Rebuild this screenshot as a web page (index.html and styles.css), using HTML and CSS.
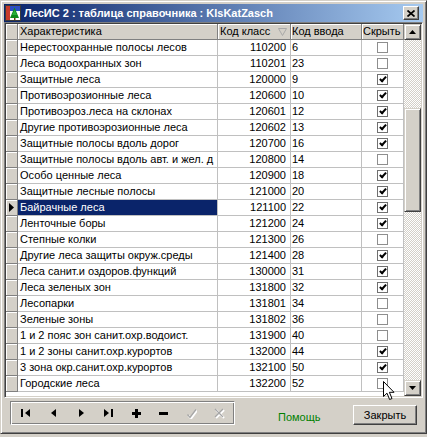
FILE: index.html
```html
<!DOCTYPE html>
<html>
<head>
<meta charset="utf-8">
<link rel="stylesheet" href="styles.css">
</head>
<body>
<div class="window">
  <div class="titlebar">
    <svg class="appicon" width="16" height="16" viewBox="0 0 16 16">
      <rect x="0.5" y="0.5" width="15" height="15" fill="#fff" stroke="#3a3a3a"/>
      <rect x="1" y="1" width="4" height="14" fill="#c83a2a"/>
      <rect x="5" y="1" width="10" height="5" fill="#2d4fc4"/>
      <polygon points="9.5,2.5 14,13 5,13" fill="#0f8a1c"/>
      <polygon points="9.5,5 12,10 7,10" fill="#2bb03a"/>
      <rect x="9" y="13" width="1.5" height="2" fill="#6b3a10"/>
    </svg>
    <span class="title">ЛесИС 2 : таблица справочника : KlsKatZasch</span>
    <div class="close">
      <svg width="8" height="7" viewBox="0 0 8 7"><path d="M0.5 0.5 L7.5 6.5 M7.5 0.5 L0.5 6.5" stroke="#000" stroke-width="1.7"/></svg>
    </div>
  </div>

  <div class="grid">
    <div class="table">
      <div class="row head">
        <div class="ind"></div>
        <div class="c1">Характеристика</div>
        <div class="c2 hc2">Код класс <svg class="sort" width="9" height="8" viewBox="0 0 9 8"><polygon points="0.5,0.5 8.5,0.5 4.5,7.5" fill="none" stroke="#a8a8a8"/></svg></div>
        <div class="c3">Код ввода</div>
        <div class="c4 hc4">Скрыть</div>
      </div>
      <div class="row"><div class="ind"></div><div class="c1">Нерестоохранные полосы лесов</div><div class="c2">110200</div><div class="c3">6</div><div class="c4"><div class="cb"></div></div></div>
      <div class="row"><div class="ind"></div><div class="c1">Леса водоохранных зон</div><div class="c2">110201</div><div class="c3">23</div><div class="c4"><div class="cb"></div></div></div>
      <div class="row"><div class="ind"></div><div class="c1">Защитные леса</div><div class="c2">120000</div><div class="c3">9</div><div class="c4"><div class="cb on"></div></div></div>
      <div class="row"><div class="ind"></div><div class="c1">Противоэрозионные леса</div><div class="c2">120600</div><div class="c3">10</div><div class="c4"><div class="cb on"></div></div></div>
      <div class="row"><div class="ind"></div><div class="c1">Противоэроз.леса на склонах</div><div class="c2">120601</div><div class="c3">12</div><div class="c4"><div class="cb on"></div></div></div>
      <div class="row"><div class="ind"></div><div class="c1">Другие противоэрозионные леса</div><div class="c2">120602</div><div class="c3">13</div><div class="c4"><div class="cb on"></div></div></div>
      <div class="row"><div class="ind"></div><div class="c1">Защитные полосы вдоль дорог</div><div class="c2">120700</div><div class="c3">16</div><div class="c4"><div class="cb on"></div></div></div>
      <div class="row"><div class="ind"></div><div class="c1">Защитные полосы вдоль авт. и жел. д</div><div class="c2">120800</div><div class="c3">14</div><div class="c4"><div class="cb"></div></div></div>
      <div class="row"><div class="ind"></div><div class="c1">Особо ценные леса</div><div class="c2">120900</div><div class="c3">18</div><div class="c4"><div class="cb on"></div></div></div>
      <div class="row"><div class="ind"></div><div class="c1">Защитные лесные полосы</div><div class="c2">121000</div><div class="c3">20</div><div class="c4"><div class="cb on"></div></div></div>
      <div class="row"><div class="ind cur"><svg width="5" height="9" viewBox="0 0 5 9"><polygon points="0,0 5,4.5 0,9" fill="#000"/></svg></div><div class="c1 sel">Байрачные леса</div><div class="c2">121100</div><div class="c3">22</div><div class="c4"><div class="cb on"></div></div></div>
      <div class="row"><div class="ind"></div><div class="c1">Ленточные боры</div><div class="c2">121200</div><div class="c3">24</div><div class="c4"><div class="cb on"></div></div></div>
      <div class="row"><div class="ind"></div><div class="c1">Степные колки</div><div class="c2">121300</div><div class="c3">26</div><div class="c4"><div class="cb"></div></div></div>
      <div class="row"><div class="ind"></div><div class="c1">Другие леса защиты окруж.среды</div><div class="c2">121400</div><div class="c3">28</div><div class="c4"><div class="cb on"></div></div></div>
      <div class="row"><div class="ind"></div><div class="c1">Леса санит.и оздоров.функций</div><div class="c2">130000</div><div class="c3">31</div><div class="c4"><div class="cb on"></div></div></div>
      <div class="row"><div class="ind"></div><div class="c1">Леса зеленых зон</div><div class="c2">131800</div><div class="c3">32</div><div class="c4"><div class="cb on"></div></div></div>
      <div class="row"><div class="ind"></div><div class="c1">Лесопарки</div><div class="c2">131801</div><div class="c3">34</div><div class="c4"><div class="cb"></div></div></div>
      <div class="row"><div class="ind"></div><div class="c1">Зеленые зоны</div><div class="c2">131802</div><div class="c3">36</div><div class="c4"><div class="cb"></div></div></div>
      <div class="row"><div class="ind"></div><div class="c1">1 и 2 пояс зон санит.охр.водоист.</div><div class="c2">131900</div><div class="c3">40</div><div class="c4"><div class="cb"></div></div></div>
      <div class="row"><div class="ind"></div><div class="c1">1 и 2 зоны санит.охр.курортов</div><div class="c2">132000</div><div class="c3">44</div><div class="c4"><div class="cb on"></div></div></div>
      <div class="row"><div class="ind"></div><div class="c1">3 зона окр.санит.охр.курортов</div><div class="c2">132100</div><div class="c3">50</div><div class="c4"><div class="cb on"></div></div></div>
      <div class="row"><div class="ind"></div><div class="c1">Городские леса</div><div class="c2">132200</div><div class="c3">52</div><div class="c4"><div class="cb"></div></div></div>
    </div>
    <div class="vscroll">
      <div class="sbtn"><svg width="7" height="4" viewBox="0 0 7 4"><polygon points="0,4 3.5,0 7,4" fill="#000"/></svg></div>
      <div class="track"><div class="thumb"></div></div>
      <div class="sbtn"><svg width="7" height="4" viewBox="0 0 7 4"><polygon points="0,0 7,0 3.5,4" fill="#000"/></svg></div>
    </div>
  </div>

  <div class="toolbar">
    <div class="nav">
      <div class="nb"><svg width="10" height="8" viewBox="0 0 10 8"><rect x="0" y="0" width="2" height="8" fill="#000"/><polygon points="4,4 9,0 9,8" fill="#000"/></svg></div>
      <div class="nb"><svg width="5" height="8" viewBox="0 0 5 8"><polygon points="0,4 5,0 5,8" fill="#000"/></svg></div>
      <div class="nb"><svg width="5" height="8" viewBox="0 0 5 8"><polygon points="0,0 5,4 0,8" fill="#000"/></svg></div>
      <div class="nb"><svg width="10" height="8" viewBox="0 0 10 8"><polygon points="0,0 5,4 0,8" fill="#000"/><rect x="7" y="0" width="2" height="8" fill="#000"/></svg></div>
      <div class="nb"><svg width="9" height="9" viewBox="0 0 9 9"><rect x="3" y="0" width="3" height="9" fill="#000"/><rect x="0" y="3" width="9" height="3" fill="#000"/></svg></div>
      <div class="nb"><svg width="9" height="3" viewBox="0 0 9 3"><rect x="0" y="0" width="9" height="3" fill="#000"/></svg></div>
      <div class="nb"><svg width="11" height="11" viewBox="0 0 11 11"><path d="M1.5 6.5 L4 9.5 L10 1.5" fill="none" stroke="#fff" stroke-width="2.2" transform="translate(1 1)"/><path d="M1.5 6.5 L4 9.5 L10 1.5" fill="none" stroke="#a6a6a6" stroke-width="1.3"/></svg></div>
      <div class="nb"><svg width="11" height="11" viewBox="0 0 11 11"><path d="M1 1 L9 9 M9 1 L1 9" fill="none" stroke="#fff" stroke-width="2.2" transform="translate(1 1)"/><path d="M1 1 L9 9 M9 1 L1 9" fill="none" stroke="#a6a6a6" stroke-width="1.3"/></svg></div>
    </div>
    <div class="help">Помощь</div>
    <div class="closebtn">Закрыть</div>
  </div>

  <svg class="cursor" width="13" height="20" viewBox="0 0 13 20"><path d="M0.5 0.5 L0.5 15.5 L4 12.2 L6.6 18.5 L9 17.5 L6.4 11.3 L11 11.3 Z" fill="#fff" stroke="#000" stroke-width="1" stroke-linejoin="miter"/></svg>
</div>
</body>
</html>
```
FILE: styles.css
```css
body {
  margin: 0;
  background: #d4d0c8;
  font-family: "Liberation Sans", Arial, sans-serif;
  font-size: 11px;
  color: #000;
}
.window {
  position: relative;
  width: 427px;
  height: 434px;
  box-sizing: border-box;
  border: 1px solid;
  border-color: #d4d0c8 #404040 #404040 #d4d0c8;
  box-shadow: inset 1px 1px 0 #fff, inset -1px -1px 0 #808080;
  padding: 3px;
  background: #d4d0c8;
  display: flex;
  flex-direction: column;
}
.titlebar {
  height: 18px;
  flex: none;
  background: linear-gradient(to right, #0a246a, #a6caf0);
  display: flex;
  align-items: center;
  color: #fff;
  font-weight: bold;
  font-size: 11px;
}
.appicon {
  margin-left: 1px;
  margin-right: 3px;
  flex: none;
}
.title {
  flex: 1;
  white-space: nowrap;
  overflow: hidden;
}
.close {
  width: 16px;
  height: 14px;
  box-sizing: border-box;
  margin-right: 4px;
  background: #d4d0c8;
  border: 1px solid;
  border-color: #fff #404040 #404040 #fff;
  box-shadow: inset -1px -1px 0 #808080;
  display: flex;
  align-items: center;
  justify-content: center;
  padding-right: 1px;
}
.grid {
  height: 376px;
  flex: none;
  box-sizing: border-box;
  border: 1px solid;
  border-color: #808080 #fff #fff #808080;
  box-shadow: inset 1px 1px 0 #404040, inset -1px -1px 0 #d4d0c8;
  padding: 1px;
  background: #fff;
  display: flex;
}
.table {
  width: 398px;
  display: flex;
  flex-direction: column;
}
.row {
  display: grid;
  grid-template-columns: 12px 200px 73px 71px 42px;
  height: 16px;
}
.row > div {
  box-sizing: border-box;
  border-right: 1px solid #c0c0c0;
  border-bottom: 1px solid #c0c0c0;
  line-height: 15px;
  white-space: nowrap;
  overflow: hidden;
  padding-left: 2px;
}
.row > .ind {
  background: #d4d0c8;
  border-color: #808080;
  box-shadow: inset 1px 1px 0 #fff;
  padding: 0;
}
.ind.cur {
  display: flex;
  align-items: center;
  padding-left: 3px;
}
.head > div {
  background: #d4d0c8;
  border-color: #808080;
  box-shadow: inset 1px 1px 0 #fff;
}
.row > .c2 {
  text-align: right;
  padding-right: 4px;
}
.row > .hc2 {
  text-align: left;
  padding-right: 0;
  display: flex;
  align-items: center;
}
.sort {
  margin-left: 8px;
}
.row > .c3 {
  padding-left: 1px;
}
.row > .hc4 {
  padding-left: 1px;
}
.row > .sel {
  background: #0a246a;
  color: #fff;
}
.cb {
  width: 11px;
  height: 11px;
  box-sizing: border-box;
  border: 1px solid #8e8e8e;
  background: #fff;
  margin: 2px 0 0 13px;
}
.cb.on {
  border-color: #707070;
}
.cb.on::after {
  content: "";
  display: block;
  width: 2px;
  height: 5px;
  border: solid #000;
  border-width: 0 2px 2px 0;
  transform: rotate(42deg);
  margin: 0 0 0 3px;
}
.vscroll {
  width: 17px;
  display: flex;
  flex-direction: column;
}
.sbtn {
  height: 16px;
  flex: none;
  box-sizing: border-box;
  background: #d4d0c8;
  border: 1px solid;
  border-color: #d4d0c8 #404040 #404040 #d4d0c8;
  box-shadow: inset 1px 1px 0 #fff, inset -1px -1px 0 #808080;
  display: flex;
  align-items: center;
  justify-content: center;
}
.track {
  flex: 1;
  background-color: #fff;
  background-image: conic-gradient(#d4d0c8 25%, transparent 0 50%, #d4d0c8 0 75%, transparent 0);
  background-size: 2px 2px;
}
.thumb {
  margin-top: 68px;
  height: 104px;
  box-sizing: border-box;
  background: #d4d0c8;
  border: 1px solid;
  border-color: #d4d0c8 #404040 #404040 #d4d0c8;
  box-shadow: inset 1px 1px 0 #fff, inset -1px -1px 0 #808080;
}
.toolbar {
  flex: 1;
  display: flex;
  align-items: flex-start;
}
.nav {
  margin: 3px 0 0 6px;
  width: 225px;
  height: 24px;
  box-sizing: border-box;
  border: 1px solid;
  border-color: #808080 #fff #fff #808080;
  box-shadow: inset 1px 1px 0 #fff, inset -1px -1px 0 #808080;
  padding: 1px;
  display: flex;
}
.nb {
  flex: 1;
  display: flex;
  align-items: center;
  justify-content: center;
}
.help {
  margin: 12px 0 0 43px;
  line-height: 15px;
  color: #008000;
}
.closebtn {
  margin: 7px 6px 0 auto;
  width: 64px;
  height: 20px;
  box-sizing: border-box;
  background: #d4d0c8;
  border: 1px solid;
  border-color: #fff #404040 #404040 #fff;
  box-shadow: inset -1px -1px 0 #808080;
  text-align: center;
  line-height: 18px;
}
.cursor {
  position: absolute;
  left: 382px;
  top: 380px;
}
```
